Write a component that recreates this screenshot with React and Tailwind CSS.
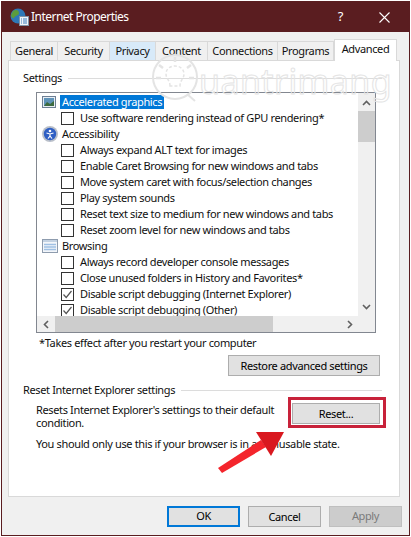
import React from 'react';

const font = "font-['Noto_Sans',sans-serif]";

const rows = [
  { type: 'head', icon: 'graphics', label: 'Accelerated graphics', selected: true },
  { type: 'check', label: 'Use software rendering instead of GPU rendering*' },
  { type: 'head', icon: 'access', label: 'Accessibility' },
  { type: 'check', label: 'Always expand ALT text for images' },
  { type: 'check', label: 'Enable Caret Browsing for new windows and tabs' },
  { type: 'check', label: 'Move system caret with focus/selection changes' },
  { type: 'check', label: 'Play system sounds' },
  { type: 'check', label: 'Reset text size to medium for new windows and tabs' },
  { type: 'check', label: 'Reset zoom level for new windows and tabs' },
  { type: 'head', icon: 'browsing', label: 'Browsing' },
  { type: 'check', label: 'Always record developer console messages' },
  { type: 'check', label: 'Close unused folders in History and Favorites*' },
  { type: 'check', label: 'Disable script debugging (Internet Explorer)', checked: true },
  { type: 'check', label: 'Disable script debugging (Other)', checked: true },
];

const tabs = [
  { label: 'General', w: 'w-[48px]' },
  { label: 'Security', w: 'w-[52px]' },
  { label: 'Privacy', w: 'w-[46px]', hover: true },
  { label: 'Content', w: 'w-[52px]' },
  { label: 'Connections', w: 'w-[70px]' },
  { label: 'Programs', w: 'w-[56px]' },
];

const GraphicsIcon = () => (
  <svg width="14" height="14" viewBox="0 0 14 14">
    <rect x="0.5" y="1.5" width="13" height="11" fill="#e8eef5" stroke="#6d7f94" />
    <rect x="2" y="3" width="10" height="8" fill="#5f93b8" />
    <path d="M2 11 L5 7 L8 9 L12 6 V11 Z" fill="#3d6b3f" />
  </svg>
);

const AccessIcon = () => (
  <svg width="16" height="16" viewBox="0 0 16 16">
    <circle cx="8" cy="8" r="8" fill="#b9bfc9" />
    <circle cx="8" cy="8" r="6.2" fill="#2f5fc4" />
    <circle cx="8" cy="5" r="1.3" fill="#fff" />
    <path d="M4.5 7 L8 8 L11.5 7 M8 8 V10 L6 12.5 M8 10 L10 12.5" stroke="#fff" strokeWidth="1.2" fill="none" />
  </svg>
);

const BrowsingIcon = () => (
  <svg width="16" height="14" viewBox="0 0 16 14">
    <rect x="0.5" y="0.5" width="15" height="13" fill="#f3f6fa" stroke="#8e9cae" />
    <rect x="1" y="1" width="14" height="2" fill="#c4d2e2" />
    <path d="M2 5.5 H14 M2 8 H14 M2 10.5 H14" stroke="#9fc0e4" strokeWidth="1.4" />
  </svg>
);

const rowIcons = { graphics: GraphicsIcon, access: AccessIcon, browsing: BrowsingIcon };

const Checkbox = ({ checked }) => (
  <span className="w-[13px] h-[13px] shrink-0 border border-[#333333] bg-white flex items-center justify-center">
    {checked && (
      <svg width="11" height="11" viewBox="0 0 11 11">
        <path d="M1.5 5.5 L4.2 8.5 L9.5 2" stroke="#555555" strokeWidth="1.2" fill="none" />
      </svg>
    )}
  </span>
);

const ListRow = ({ row }) => {
  if (row.type === 'head') {
    const Icon = rowIcons[row.icon];
    return (
      <div className="h-4 flex items-center">
        <span className="w-[23px] pl-[5px] shrink-0 flex items-center justify-start"><Icon /></span>
        <span className={`px-[2px] leading-[14px] ${row.selected ? 'bg-[#0078d7] text-white' : ''}`}>{row.label}</span>
      </div>
    );
  }
  return (
    <div className="h-4 flex items-center pl-[24px] gap-[6px]">
      <Checkbox checked={row.checked} />
      <span className="whitespace-nowrap">{row.label}</span>
    </div>
  );
};

const Chevron = ({ d }) => (
  <svg width="9" height="9" viewBox="0 0 9 9">
    <path d={d} stroke="#606060" strokeWidth="1.6" fill="none" />
  </svg>
);

const ActionButton = ({ children, className = '' }) => (
  <button className={`h-[21px] shrink-0 bg-[#e1e1e1] border border-[#adadad] text-black leading-none ${className}`}>
    {children}
  </button>
);

const GroupLabel = ({ children, className = '' }) => (
  <div className={`flex items-center gap-[6px] ml-[14px] mr-[17px] h-4 ${className}`}>
    <span className="whitespace-nowrap">{children}</span>
    <span className="flex-1 h-px bg-[#dcdcdc]" />
  </div>
);

export default function App() {
  return (
    <div className={`relative w-[411px] h-[537px] bg-white overflow-hidden text-[11px] text-[#101010] tracking-[-0.36px] ${font}`}>
      <div className="absolute left-px top-px w-[409px] h-[535px] border border-[#5a1d20] bg-[#f0f0f0] flex flex-col">
        {/* Title bar */}
        <div className="h-[30px] shrink-0 bg-[#5a1d20] flex items-center text-white">
          <svg className="ml-[8px]" width="19" height="18" viewBox="0 0 19 18">
            <circle cx="8" cy="8" r="7.5" fill="#2e78b8" />
            <path d="M3 3 C6 1 9 2 9 5 C9 8 5 7 4 10 C3 11 1 9 1 7 Z" fill="#5c9c3c" />
            <path d="M10 11 C12 9 14 10 14 12 L11 15 Z" fill="#5c9c3c" />
            <rect x="9.5" y="8.5" width="9" height="9" fill="#eef3f8" stroke="#7f93a8" />
            <path d="M11 11 H12 M13 11 H17 M11 13 H12 M13 13 H17 M11 15 H12 M13 15 H17" stroke="#3f7fbf" />
          </svg>
          <span className="ml-[2px] text-[12px] tracking-[-0.52px]">Internet Properties</span>
          <span className="ml-auto mr-[36px] text-[13px]">?</span>
          <svg className="mr-[19px]" width="11" height="11" viewBox="0 0 11 11">
            <path d="M0.5 0.5 L10.5 10.5 M10.5 0.5 L0.5 10.5" stroke="#ffffff" strokeWidth="1.1" />
          </svg>
        </div>

        {/* Tabs */}
        <div className="h-[28px] shrink-0 pl-[8px] flex items-end">
          {tabs.map((t) => (
            <div
              key={t.label}
              className={`${t.w} h-[19px] border border-b-0 border-l-0 border-[#d9d9d9] flex items-center justify-center first:border-l ${t.hover ? 'bg-[#d8eaf9]' : 'bg-[#f0f0f0]'}`}
            >
              {t.label}
            </div>
          ))}
          <div className="relative z-10 w-[63px] h-[22px] -mb-px bg-white border border-b-0 border-[#d9d9d9] flex items-center justify-center pb-[2px]">
            Advanced
          </div>
        </div>

        {/* Tab panel */}
        <div className="ml-[6px] w-[392px] h-[437px] shrink-0 bg-white border border-[#d9d9d9] flex flex-col">
          <GroupLabel className="mt-[9px]">Settings</GroupLabel>

          <div className="relative ml-[27px] mt-[6px] w-[340px] h-[241px] border border-[#828790] flex flex-col overflow-hidden">
            <div className="flex-1 flex min-h-0">
              <div className="flex-1 pt-[1px] overflow-hidden">
                {rows.map((row) => (
                  <ListRow key={row.label} row={row} />
                ))}
              </div>
              <div className="w-[17px] bg-[#f0f0f0] flex flex-col items-center pt-[6px]">
                <Chevron d="M1 6 L4.5 2.5 L8 6" />
                <div className="w-full h-[31px] mt-[3px] bg-[#cdcdcd]" />
                <div className="mt-auto mb-[5px]"><Chevron d="M1 3 L4.5 6.5 L8 3" /></div>
              </div>
            </div>
            <div className="h-[16px] shrink-0 bg-[#f0f0f0] flex items-center">
              <div className="w-[18px] flex justify-center"><Chevron d="M6 1 L2.5 4.5 L6 8" /></div>
              <div className="w-[218px] h-full bg-[#cdcdcd]" />
              <div className="ml-auto mr-[21px]"><Chevron d="M3 1 L6.5 4.5 L3 8" /></div>
            </div>
          </div>

          <div className="ml-[30px] mt-[2px] h-4 flex items-center">*Takes effect after you restart your computer</div>

          <ActionButton className="self-end mr-[19px] mt-[4px] w-[152px]">Restore advanced settings</ActionButton>

          <GroupLabel className="mt-[6px]">Reset Internet Explorer settings</GroupLabel>

          <div className="flex ml-[27px] mr-[19px] mt-[5px]">
            <div className="flex-1 min-w-0 leading-[13px]">
              <p className="w-[248px]">Resets Internet Explorer's settings to their default condition.</p>
              <p className="mt-[8px] whitespace-nowrap">You should only use this if your browser is in an unusable state.</p>
            </div>
            <ActionButton className="w-[88px]">Reset...</ActionButton>
          </div>
        </div>

        {/* Footer buttons */}
        <div className="flex justify-end gap-[8px] pt-[9px] pr-[7px]">
          <button className="w-[73px] h-[21px] bg-[#e1e1e1] border-2 border-[#0078d7] text-black">OK</button>
          <ActionButton className="w-[73px]">Cancel</ActionButton>
          <button className="w-[73px] h-[21px] bg-[#cccccc] border border-[#bfbfbf] text-[#7a7a7a]">Apply</button>
        </div>
      </div>

      {/* Watermark */}
      <div className="absolute left-[151px] top-[53px] flex items-center pointer-events-none">
        <svg width="50" height="50" viewBox="0 0 50 50" fill="none" stroke="#e4e4e4" strokeWidth="2">
          <circle cx="24" cy="24" r="22" />
          <path d="M19 33 C19 27 15 26 15 21 C15 16 19 13 24 13 C29 13 33 16 33 21 C33 26 29 27 29 33 Z" strokeWidth="1.5" strokeDasharray="3 2" />
          <path d="M24 4 V9 M8 12 L12 15 M40 12 L36 15 M5 25 H10 M38 25 H43" strokeWidth="2.5" />
          <path d="M36 41 L44 48" />
        </svg>
        <span className="text-[34px] leading-none tracking-[0.4px] text-transparent [-webkit-text-stroke:1px_#e4e4e4] -ml-[2px] mt-[6px]">uantrimang</span>
      </div>

      {/* Callout over the Reset button */}
      <div className="absolute left-[288px] top-[397px] w-[98px] h-[31px] border-[3px] border-[#c8223a] pointer-events-none" />
      <svg className="absolute left-[210px] top-[425px] pointer-events-none" width="80" height="55" viewBox="0 0 80 55">
        <path d="M8 43 L12 48 L56 22 L51 15 Z" fill="#f4252c" />
        <path d="M46 7 L74 7 L61 31 Z" fill="#d9181f" />
      </svg>
    </div>
  );
}
